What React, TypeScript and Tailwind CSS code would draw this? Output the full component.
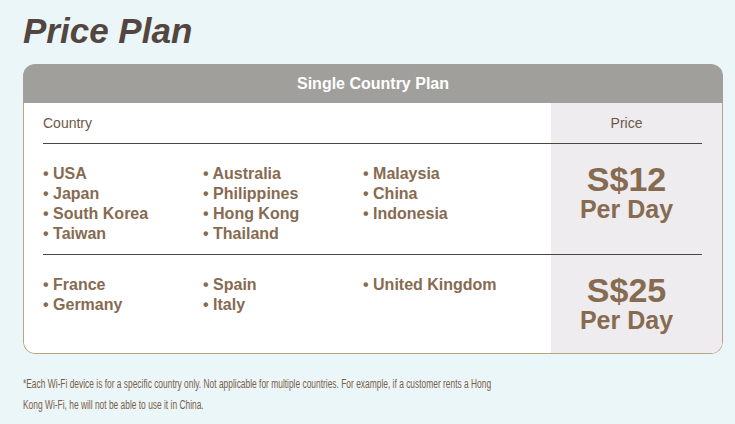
const rows = [
  {
    cols: [
      ['USA', 'Japan', 'South Korea', 'Taiwan'],
      ['Australia', 'Philippines', 'Hong Kong', 'Thailand'],
      ['Malaysia', 'China', 'Indonesia'],
    ],
    price: 'S$12',
    h: 'h-[111px]',
  },
  {
    cols: [['France', 'Germany'], ['Spain', 'Italy'], ['United Kingdom']],
    price: 'S$25',
    h: 'h-[98px]',
  },
]

export default function App() {
  return (
    <div className="min-h-screen w-[735px] h-[424px] overflow-hidden bg-[#eaf6f8] px-[23px] pr-[12px] font-['Liberation_Sans',Arial,sans-serif] text-[#866b51]">
      <h1 className="pt-[11px] text-[35px] leading-[40px] font-bold italic text-[#54463f]">Price Plan</h1>

      {/* Card */}
      <div className="mt-[13px] w-[700px] rounded-[12px] overflow-hidden bg-white">
        <div className="h-[39px] bg-[#a19f9c] flex items-center justify-center text-white text-[16px] font-bold">
          Single Country Plan
        </div>
        <div className="border-x border-b border-[#b9a57f] rounded-b-[12px] overflow-hidden">
          {/* Header row */}
          <div className="flex">
            <div className="flex-1 pl-[19px]">
              <div className="h-[41px] border-b border-[#4f4440] flex items-center text-[14px] text-[#6b5848]">Country</div>
            </div>
            <div className="w-[171px] bg-[#efecef] pr-[20px]">
              <div className="h-[41px] border-b border-[#4f4440] flex items-center justify-center text-[14px] text-[#6b5848]">Price</div>
            </div>
          </div>

          {rows.map((r, i) => (
            <div key={r.price} className="flex">
              <div className="flex-1 pl-[19px]">
                <div className={`${r.h} pt-[20px] flex ${i === 0 ? 'border-b border-[#4f4440]' : ''}`}>
                  {r.cols.map((c, j) => (
                    <ul key={j} className="w-[160px] text-[16px] leading-[20px] font-bold">
                      {c.map(n => (
                        <li key={n}>• {n}</li>
                      ))}
                    </ul>
                  ))}
                </div>
              </div>
              <div className="w-[171px] bg-[#efecef] pr-[20px]">
                <div className={`${r.h} pt-[19px] text-center font-bold text-[#866b51] ${i === 0 ? 'border-b border-[#4f4440]' : ''}`}>
                  <div className="text-[34px] leading-[32px]">{r.price}</div>
                  <div className="text-[25px] leading-[28px]">Per Day</div>
                </div>
              </div>
            </div>
          ))}
        </div>
      </div>

      {/* Footnote (narrow face in the original) */}
      <p className="mt-[20px] w-[680px] whitespace-nowrap origin-left scale-x-[0.7] text-[12px] leading-[21px] text-[#7a6049]">
        *Each Wi-Fi device is for a specific country only. Not applicable for multiple countries. For example, if a customer rents a Hong<br />
        Kong Wi-Fi, he will not be able to use it in China.
      </p>
    </div>
  )
}
